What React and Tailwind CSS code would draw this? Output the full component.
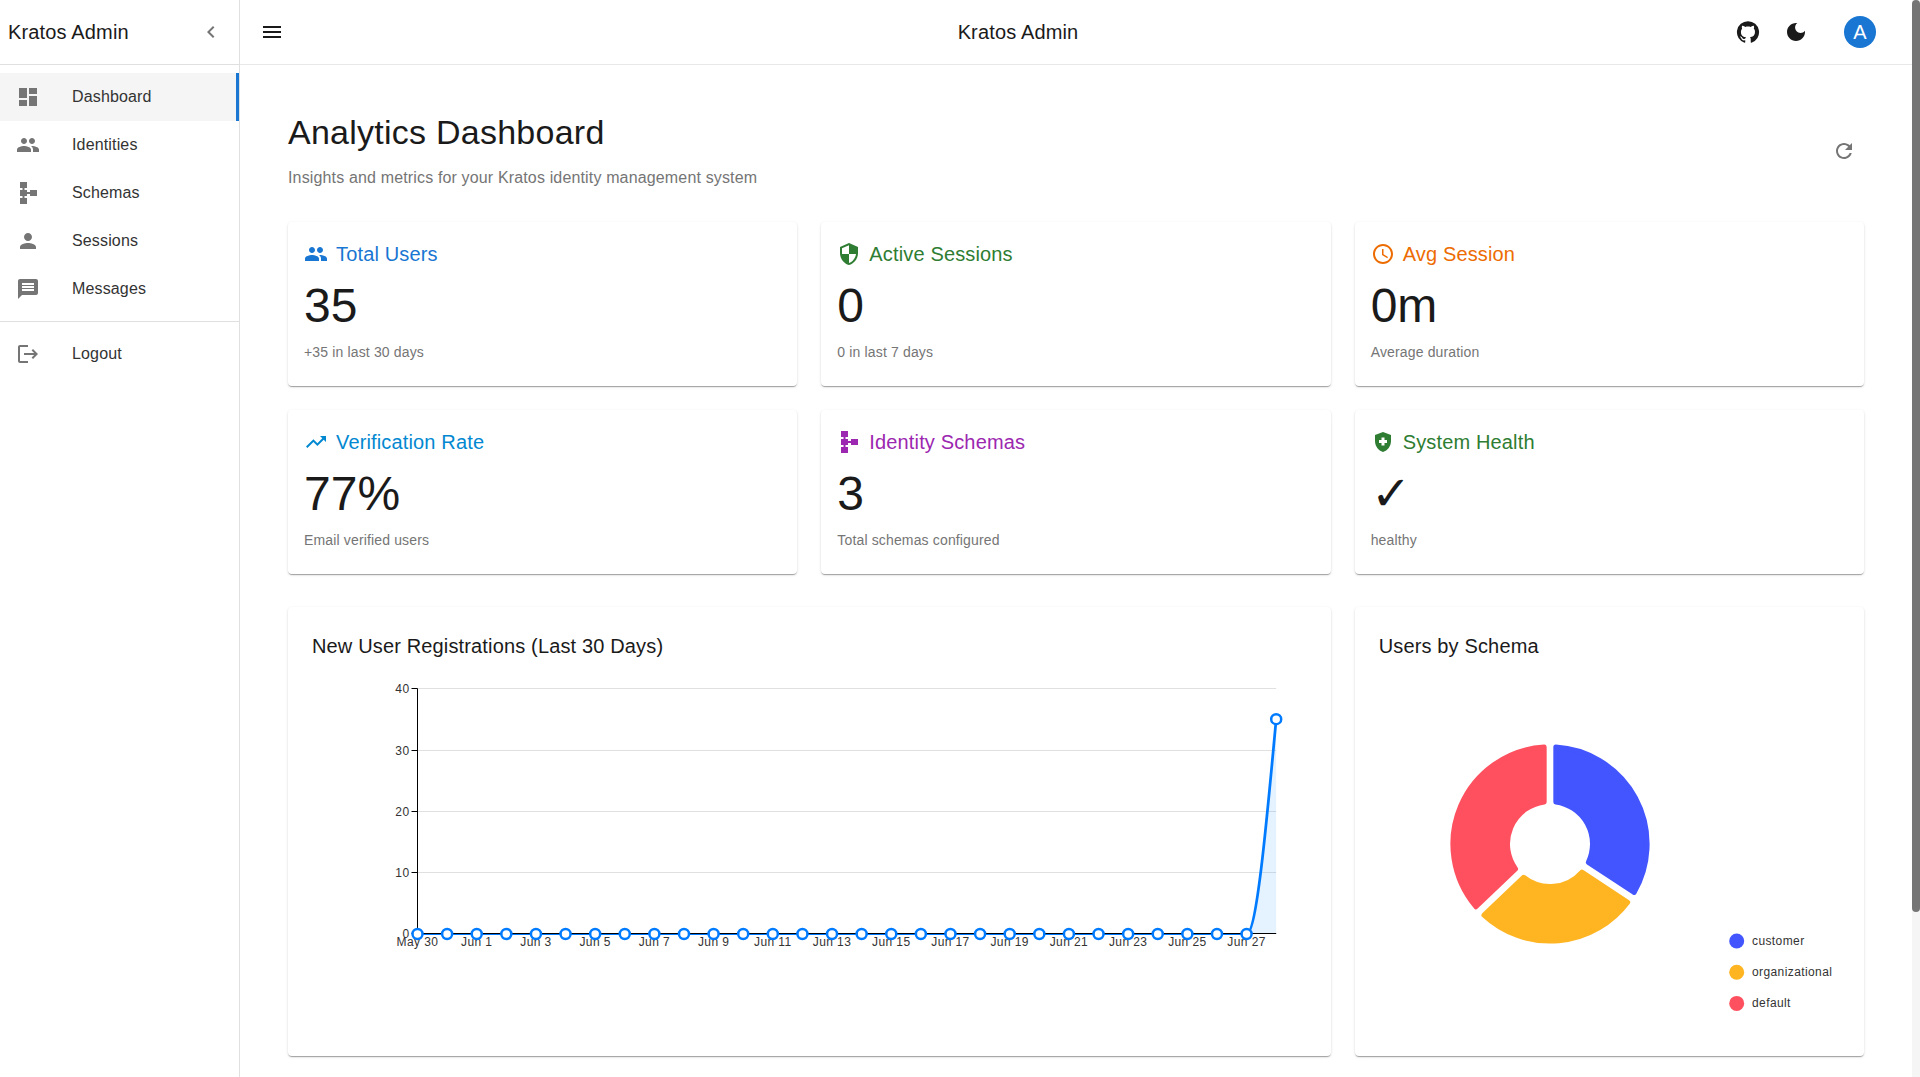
import React from 'react';

const paths = {
  dashboard: 'M3 13h8V3H3zm0 8h8v-6H3zm10 0h8V11h-8zm0-18v6h8V3z',
  people: 'M16 11c1.66 0 2.99-1.34 2.99-3S17.66 5 16 5s-3 1.34-3 3 1.34 3 3 3m-8 0c1.66 0 2.99-1.34 2.99-3S9.66 5 8 5 5 6.34 5 8s1.34 3 3 3m0 2c-2.33 0-7 1.17-7 3.5V19h14v-2.5c0-2.33-4.67-3.5-7-3.5m8 0c-.29 0-.62.02-.97.05 1.16.84 1.97 1.97 1.97 3.45V19h6v-2.5c0-2.33-4.67-3.5-7-3.5',
  schema: 'M14 9v2h-3V9H8.5V7H11V1H4v6h2.5v2H4v6h2.5v2H4v6h7v-6H8.5v-2H11v-2h3v2h7V9z',
  person: 'M12 12c2.21 0 4-1.79 4-4s-1.79-4-4-4-4 1.79-4 4 1.79 4 4 4m0 2c-2.67 0-8 1.34-8 4v2h16v-2c0-2.66-5.33-4-8-4',
  message: 'M20 2H4c-1.1 0-1.99.9-1.99 2L2 22l4-4h14c1.1 0 2-.9 2-2V4c0-1.1-.9-2-2-2m-2 12H6v-2h12zm0-3H6V9h12zm0-3H6V6h12z',
  logout: 'M17 7l-1.41 1.41L18.17 11H8v2h10.17l-2.58 2.58L17 17l5-5zM4 5h8V3H4c-1.1 0-2 .9-2 2v14c0 1.1.9 2 2 2h8v-2H4z',
  chevron: 'M15.41 7.41 14 6l-6 6 6 6 1.41-1.41L10.83 12z',
  menu: 'M3 18h18v-2H3zm0-5h18v-2H3zm0-7v2h18V6z',
  github: 'M12 1.27a11 11 0 00-3.48 21.46c.55.09.73-.28.73-.55v-1.84c-3.03.64-3.67-1.46-3.67-1.46-.55-1.29-1.28-1.65-1.28-1.65-.92-.65.1-.65.1-.65 1.1 0 1.73 1.1 1.73 1.1.92 1.65 2.57 1.2 3.21.92a2 2 0 01.64-1.47c-2.47-.27-5.04-1.19-5.04-5.5 0-1.1.46-2.1 1.2-2.84a3.76 3.76 0 010-2.93s.91-.28 3.11 1.1c1.8-.49 3.7-.49 5.5 0 2.1-1.38 3.02-1.1 3.02-1.1a3.76 3.76 0 010 2.93c.83.74 1.2 1.74 1.2 2.94 0 4.21-2.57 5.13-5.04 5.4.45.37.82.92.82 2.02v3.03c0 .27.1.64.73.55A11 11 0 0012 1.27',
  moon: 'M12 3c-4.97 0-9 4.03-9 9s4.03 9 9 9 9-4.03 9-9c0-.46-.04-.92-.1-1.36-.98 1.37-2.58 2.26-4.4 2.26-2.98 0-5.4-2.42-5.4-5.4 0-1.81.89-3.42 2.26-4.4-.44-.06-.9-.1-1.36-.1',
  refresh: 'M17.65 6.35C16.2 4.9 14.21 4 12 4c-4.42 0-7.99 3.58-7.99 8s3.57 8 7.99 8c3.73 0 6.84-2.55 7.73-6h-2.08c-.82 2.33-3.04 4-5.65 4-3.31 0-6-2.69-6-6s2.69-6 6-6c1.66 0 3.14.69 4.22 1.78L13 11h7V4z',
  security: 'M12 1 3 5v6c0 5.55 3.84 10.74 9 12 5.16-1.26 9-6.45 9-12V5zm0 10.99h7c-.53 4.12-3.28 7.79-7 8.94V12H5V6.3l7-3.11z',
  clock: 'M11.99 2C6.47 2 2 6.48 2 12s4.47 10 9.99 10C17.52 22 22 17.52 22 12S17.52 2 11.99 2M12 20c-4.42 0-8-3.58-8-8s3.58-8 8-8 8 3.58 8 8-3.58 8-8 8m.5-13H11v6l5.25 3.15.75-1.23-4.5-2.67z',
  trending: 'm16 6 2.29 2.29-4.88 4.88-4-4L2 16.59 3.41 18l6-6 4 4 6.3-6.29L22 12V6z',
  health: 'M10.5 13H8v-3h2.5V7.5h3V10H16v3h-2.5v2.5h-3zM12 2 4 5v6.09c0 5.05 3.41 9.76 8 10.91 4.59-1.15 8-5.86 8-10.91V5z',
};

const Icon = ({ name, className = '' }) => (
  <svg viewBox="0 0 24 24" className={`w-6 h-6 shrink-0 fill-current ${className}`}>
    <path d={paths[name]} />
  </svg>
);

const navItems = [
  { label: 'Dashboard', icon: 'dashboard', active: true },
  { label: 'Identities', icon: 'people' },
  { label: 'Schemas', icon: 'schema' },
  { label: 'Sessions', icon: 'person' },
  { label: 'Messages', icon: 'message' },
];

const stats = [
  { title: 'Total Users', icon: 'people', color: 'text-[#1976d2]', value: '35', note: '+35 in last 30 days' },
  { title: 'Active Sessions', icon: 'security', color: 'text-[#2e7d32]', value: '0', note: '0 in last 7 days' },
  { title: 'Avg Session', icon: 'clock', color: 'text-[#ed6c02]', value: '0m', note: 'Average duration' },
  { title: 'Verification Rate', icon: 'trending', color: 'text-[#0288d1]', value: '77%', note: 'Email verified users' },
  { title: 'Identity Schemas', icon: 'schema', color: 'text-[#9c27b0]', value: '3', note: 'Total schemas configured' },
  { title: 'System Health', icon: 'health', color: 'text-[#2e7d32]', value: '✓', note: 'healthy' },
];

const NavItem = ({ label, icon, active }) => (
  <div className={`h-12 flex items-center pl-4 ${active ? 'bg-[#f5f5f5] border-r-[3px] border-[#1976d2]' : ''}`}>
    <Icon name={icon} className="text-[#757575]" />
    <span className="ml-8 text-base text-[#333333]">{label}</span>
  </div>
);

const StatCard = ({ title, icon, color, value, note }) => (
  <div className="h-[164px] bg-white rounded-sm px-4 pt-4 shadow-[0_2px_1px_-1px_rgba(0,0,0,0.2),0_1px_1px_0_rgba(0,0,0,0.14),0_1px_3px_0_rgba(0,0,0,0.12)]">
    <div className={`h-8 flex items-center gap-2 text-xl ${color}`}>
      <Icon name={icon} />
      <span>{title}</span>
    </div>
    <div className="mt-2 text-5xl leading-[56px] tracking-normal text-[#1a1a1a]">{value}</div>
    <div className="mt-2 text-sm leading-5 text-[#757575]">{note}</div>
  </div>
);

const ZERO_Y = 262.5;
const LINE_Y = 263;
const LEFT_X = 105.5;
const STEP_X = 29.61;
const RIGHT_X = LEFT_X + STEP_X * 29;
const PEAK_Y = ZERO_Y - 35 * 6.125;
const LAST_ZERO_X = LEFT_X + STEP_X * 28;

const dateLabels = ['May 30', 'Jun 1', 'Jun 3', 'Jun 5', 'Jun 7', 'Jun 9', 'Jun 11', 'Jun 13', 'Jun 15', 'Jun 17', 'Jun 19', 'Jun 21', 'Jun 23', 'Jun 25', 'Jun 27'];

const curve = `M${LAST_ZERO_X} ${LINE_Y}C${LAST_ZERO_X + STEP_X / 3} ${LINE_Y} ${RIGHT_X - STEP_X / 3} ${(LINE_Y + PEAK_Y) / 2} ${RIGHT_X} ${PEAK_Y}`;

// snap grid lines to whole pixels
const tickY = (v) => Math.floor(ZERO_Y - v * 6.125 + 0.25) + 0.5;

const LineChart = () => (
  <svg className="w-full h-[361px] block tracking-[0.4px]">
    {[10, 20, 30, 40].map((v) => (
      <line key={v} x1={LEFT_X} x2={RIGHT_X} y1={tickY(v)} y2={tickY(v)} stroke="#e0e0e0" />
    ))}
    <path d={`${curve}V${LINE_Y}Z`} fill="#007bff" fillOpacity="0.1" />
    <line x1={LEFT_X} x2={LAST_ZERO_X} y1={LINE_Y} y2={LINE_Y} stroke="#007bff" strokeWidth="2" />
    <path d={curve} fill="none" stroke="#007bff" strokeWidth="2.75" />
    <line x1={LEFT_X} x2={LEFT_X} y1={tickY(40)} y2={ZERO_Y} stroke="#000" />
    <line x1={LEFT_X} x2={RIGHT_X} y1={ZERO_Y} y2={ZERO_Y} stroke="#000" />
    {[0, 10, 20, 30, 40].map((v) => (
      <g key={v}>
        <line x1={LEFT_X - 6} x2={LEFT_X} y1={tickY(v)} y2={tickY(v)} stroke="#000" />
        <text x={LEFT_X - 8} y={tickY(v) + 4} textAnchor="end" fontSize="12" fill="#333">{v}</text>
      </g>
    ))}
    {dateLabels.map((d, i) => (
      <text key={d} x={LEFT_X + STEP_X * 2 * i} y={ZERO_Y + 12.5} textAnchor="middle" fontSize="12" fill="#333">{d}</text>
    ))}
    {Array.from({ length: 30 }, (_, i) => (
      <circle key={i} cx={LEFT_X + STEP_X * i} cy={i === 29 ? PEAK_Y : LINE_Y} r="5" fill="#fff" stroke="#007bff" strokeWidth="2.5" />
    ))}
  </svg>
);

const PIE_X = 171;
const PIE_Y = 173;
const CORNER = 2.5;

// wedge is inset by the corner radius, the stroke brings it back with round joins
const slicePath = (from, to) => {
  const outer = 99.6 - CORNER;
  const inner = 40 + CORNER;
  const gap = 3.33 + CORNER;
  const rad = Math.PI / 180;
  const pt = (r, a) => `${PIE_X + r * Math.sin(a)} ${PIE_Y - r * Math.cos(a)}`;
  const a0 = from * rad;
  const a1 = to * rad;
  const large = to - from > 180 ? 1 : 0;
  return `M${pt(outer, a0 + Math.asin(gap / outer))}A${outer} ${outer} 0 ${large} 1 ${pt(outer, a1 - Math.asin(gap / outer))}L${pt(inner, a1 - Math.asin(gap / inner))}A${inner} ${inner} 0 ${large} 0 ${pt(inner, a0 + Math.asin(gap / inner))}Z`;
};

const slices = [
  { label: 'customer', color: '#4255ff', from: 0, to: 123.4 },
  { label: 'organizational', color: '#ffb422', from: 123.4, to: 226.3 },
  { label: 'default', color: '#ff505f', from: 226.3, to: 360 },
];

const PieChart = () => (
  <svg className="w-full h-[361px] block tracking-[0.4px]">
    {slices.map((s) => (
      <path key={s.label} d={slicePath(s.from, s.to)} fill={s.color} stroke={s.color} strokeWidth={CORNER * 2} strokeLinejoin="round" />
    ))}
    {slices.map((s, i) => (
      <g key={s.label}>
        <circle cx="357.7" cy={270 + i * 31.2} r="7.5" fill={s.color} />
        <text x="373" y={274 + i * 31.2} fontSize="12" fill="#333">{s.label}</text>
      </g>
    ))}
  </svg>
);

const ChartCard = ({ title, className = '', children }) => (
  <div className={`h-[449px] bg-white rounded-sm p-6 shadow-[0_2px_1px_-1px_rgba(0,0,0,0.2),0_1px_1px_0_rgba(0,0,0,0.14),0_1px_3px_0_rgba(0,0,0,0.12)] ${className}`}>
    <div className="text-xl leading-[31px] mb-[9px] text-[#1a1a1a]">{title}</div>
    {children}
  </div>
);

const App = () => {
  return (
    <div className="h-screen flex overflow-hidden bg-white tracking-[0.15px] font-['Liberation_Sans',Arial,sans-serif]">
      {/* Sidebar */}
      <aside className="w-60 shrink-0 border-r border-[#e0e0e0]">
        <div className="h-[65px] flex items-center justify-between pl-2 pr-4 border-b border-[#e0e0e0]">
          <span className="text-xl text-[#1a1a1a]">Kratos Admin</span>
          <Icon name="chevron" className="text-[#757575]" />
        </div>
        <nav className="py-2">
          {navItems.map((item) => (
            <NavItem key={item.label} {...item} />
          ))}
        </nav>
        <div className="border-t border-[#e0e0e0] py-2">
          <NavItem label="Logout" icon="logout" />
        </div>
      </aside>

      <div className="flex-1 min-w-0">
        {/* Top bar */}
        <header className="h-[65px] flex items-center pl-5 pr-9 border-b border-[#e8e8e8] text-[#1a1a1a]">
          <Icon name="menu" />
          <div className="flex-1 ml-6 text-center text-xl">Kratos Admin</div>
          <div className="w-10 h-10 flex items-center justify-center">
            <Icon name="github" />
          </div>
          <div className="ml-2 w-10 h-10 flex items-center justify-center">
            <Icon name="moon" />
          </div>
          <div className="ml-7 w-8 h-8 rounded-full bg-[#1976d2] text-white text-xl flex items-center justify-center">A</div>
        </header>

        {/* Page content */}
        <main className="px-12 pt-[46px]">
          <div className="flex items-center justify-between mb-8">
            <div>
              <h1 className="text-[34px] leading-[42px] tracking-[0.25px] text-[#1a1a1a]">Analytics Dashboard</h1>
              <p className="mt-[13px] text-base leading-6 text-[#757575]">Insights and metrics for your Kratos identity management system</p>
            </div>
            <div className="w-10 h-10 flex items-center justify-center">
              <Icon name="refresh" className="text-[#757575]" />
            </div>
          </div>

          <div className="grid grid-cols-3 gap-6">
            {stats.map((s) => (
              <StatCard key={s.title} {...s} />
            ))}
          </div>

          <div className="grid grid-cols-3 gap-6 mt-[33px]">
            <ChartCard title="New User Registrations (Last 30 Days)" className="col-span-2">
              <LineChart />
            </ChartCard>
            <ChartCard title="Users by Schema">
              <PieChart />
            </ChartCard>
          </div>
        </main>
      </div>

      {/* Scrollbar */}
      <div className="w-2 shrink-0 bg-[#f5f5f5]">
        <div className="h-[912px] bg-[#757575] rounded-[4px]" />
      </div>
    </div>
  );
};

export default App;
